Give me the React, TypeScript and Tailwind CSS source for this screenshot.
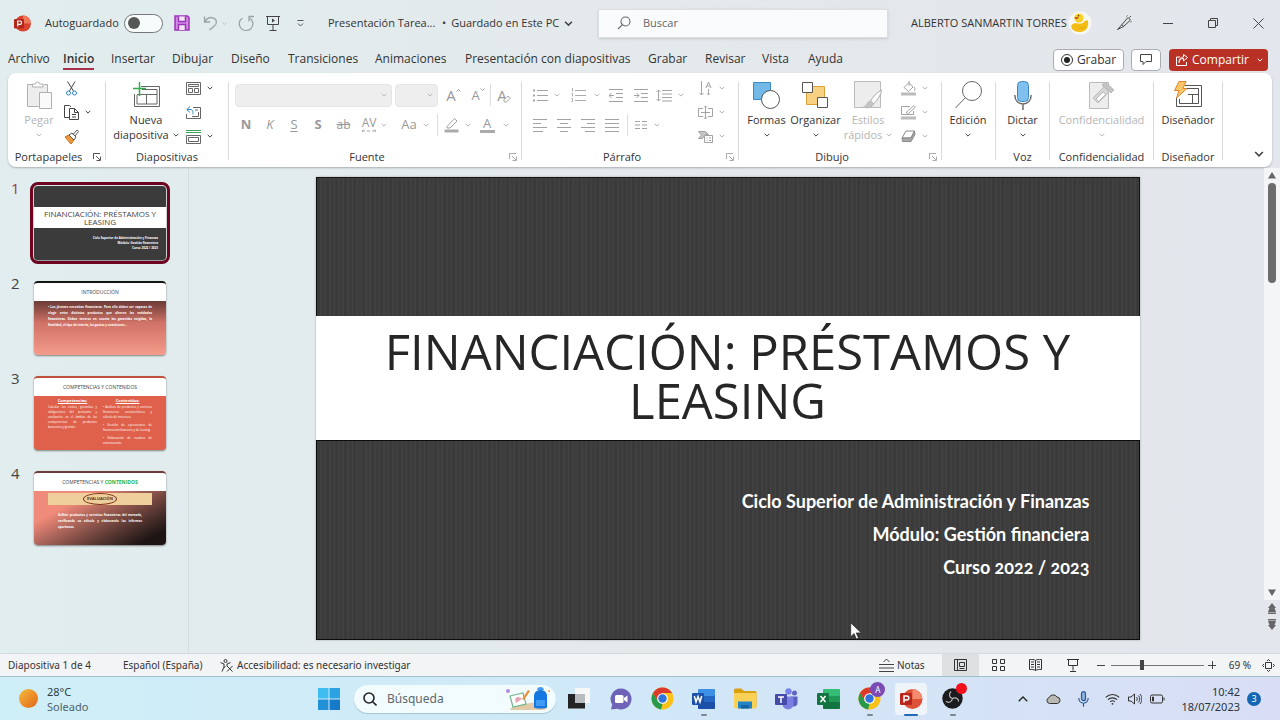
import type { ReactNode } from "react";

type Kids = { children?: ReactNode };

const Svg = ({ w, h, vb, children, stroke = "#444", sw = 1 }: { w: number; h: number; vb?: string; stroke?: string; sw?: number } & Kids) => (
  <svg width={w} height={h} viewBox={vb ?? `0 0 ${w} ${h}`} fill="none" stroke={stroke} strokeWidth={sw} aria-hidden="true" className="shrink-0">
    {children}
  </svg>
);

const Chev = ({ c = "#444", w = 6 }: { c?: string; w?: number }) => (
  <Svg w={w} h={w} vb="0 0 6 6" stroke={c} sw={1}>
    <path d="M.7 1.8 3 4.1 5.3 1.8" />
  </Svg>
);

const Btn = ({ label, cls, children }: { label: string; cls: string } & Kids) => (
  <button type="button" aria-label={label} className={`flex shrink-0 items-center justify-center ${cls}`}>
    {children}
  </button>
);

const Sep = () => <div className="mt-[6px] mb-[7px] w-px shrink-0 bg-[#d9dadb]" />;

const Group = ({ title, cls, launcher, faded, children }: { title: string; cls: string; launcher?: boolean; faded?: boolean } & Kids) => (
  <section className={`flex shrink-0 flex-col ${cls}`}>
    <div className="flex h-[73px] justify-start">{children}</div>
    <div className="flex h-4 items-center">
      <h2 className="flex-1 text-center text-[11px] leading-4 whitespace-nowrap text-[#333]">{title}</h2>
      {launcher && (
        <Btn label={`Opciones de ${title}`} cls="w-4">
          <Svg w={8} h={8} stroke={faded ? "#aaa" : "#555"}>
            <path d="M.5 6V.5H7M3 3l4 4M7.5 3.5v4h-4" />
          </Svg>
        </Btn>
      )}
    </div>
  </section>
);

const Big = ({ icon, lines, cls, faded, chevron = "none" }: { icon: ReactNode; lines: string[]; cls: string; faded?: boolean; chevron?: "none" | "inline" | "below" }) => (
  <button type="button" className={`flex shrink-0 flex-col items-center pt-[2px] text-[11px] leading-[15px] ${faded ? "text-[#b5b5b5]" : "text-[#333]"} ${cls}`}>
    <span className="flex h-[34px] items-center justify-center">{icon}</span>
    {lines.map((l, i) => (
      <span key={l} className="flex items-center gap-1 whitespace-nowrap">
        {l}
        {chevron === "inline" && i === lines.length - 1 && <Chev c={faded ? "#b5b5b5" : "#444"} />}
      </span>
    ))}
    {chevron === "below" && (
      <span className="flex h-[15px] items-center">
        <Chev c={faded ? "#b5b5b5" : "#444"} />
      </span>
    )}
  </button>
);

const Row3 = ({ items, cls }: { items: { label: string; icon: ReactNode; chev?: boolean; faded?: boolean }[]; cls: string }) => (
  <div className={`flex shrink-0 flex-col ${cls}`}>
    {items.map((i) => (
      <button type="button" key={i.label} aria-label={i.label} className="flex h-6 items-center gap-[6px]">
        <span className="flex w-4 justify-center">{i.icon}</span>
        {i.chev && <Chev c={i.faded ? "#b5b5b5" : "#444"} />}
      </button>
    ))}
  </div>
);

const G = "#a3a3a3";

const Lines = ({ xs }: { xs: [number, number][] }) => (
  <Svg w={14} h={13} stroke={G}>
    {xs.map(([a, b], i) => (
      <path key={i} d={`M${a} ${i * 4 + 0.5}H${b}`} />
    ))}
  </Svg>
);

const TABS: [string, string][] = [
  ["Archivo", "w-[55px]"],
  ["Inicio", "w-[48px]"],
  ["Insertar", "w-[61px]"],
  ["Dibujar", "w-[59px]"],
  ["Diseño", "w-[57px]"],
  ["Transiciones", "w-[87px]"],
  ["Animaciones", "w-[90px]"],
  ["Presentación con diapositivas", "w-[183px]"],
  ["Grabar", "w-[57px]"],
  ["Revisar", "w-[57px]"],
  ["Vista", "w-[46px]"],
  ["Ayuda", "w-[46px]"],
];

function TitleBar() {
  return (
    <header className="flex h-[46px] shrink-0 items-center pl-[14px] text-[11px] text-[#333]">
      <Svg w={17} h={17} stroke="none">
        <circle cx="9" cy="8.500" r="8" fill="#d9432d" />
        <path d="M9 .5a8 8 0 0 1 8 8H9z" fill="#ee7a5c" />
        <rect x="0" y="4" width="10" height="9.500" rx="1" fill="#b3261a" />
        <path d="M3.700 11.500V6h2.200a1.700 1.700 0 0 1 0 3.400H3.700" stroke="#fff" strokeWidth="1.200" />
      </Svg>
      <label htmlFor="autosave" className="ml-[14px] w-[79px] whitespace-nowrap">Autoguardado</label>
      <span className="flex h-[19px] w-[39px] shrink-0 items-center rounded-full border border-[#777] bg-[#f8fbfb] px-[3px]">
        <input id="autosave" type="checkbox" className="h-3 w-3 appearance-none rounded-full bg-[#565656]" />
      </span>
      <Btn label="Guardar" cls="ml-[3px] w-[32px]">
        <Svg w={16} h={16} stroke="#9a35b5" sw={1.5}>
          <path d="M1 1h12.500L15 2.500V15H1z" fill="#d38be6" />
          <path d="M4.500 1.500v5h7v-5M4.500 15V9.500h7V15" fill="#f2e6f6" />
        </Svg>
      </Btn>
      <Btn label="Deshacer" cls="w-[34px] gap-1">
        <Svg w={15} h={16} stroke="#9aa3a5" sw={1.3}>
          <path d="M1.500 1.500v5.500H7M1.700 6.800C4 3 7 2 10 2.800c4 1.300 4.500 5.700 1.500 8L6.500 15" />
        </Svg>
        <Chev c="#b3babc" w={5} />
      </Btn>
      <Btn label="Rehacer" cls="w-[28px]">
        <Svg w={16} h={16} stroke="#9aa3a5" sw={1.3}>
          <path d="M4.500 3A6.800 6.800 0 1 0 12 3.200M16 1.500h-5V6.500" />
        </Svg>
      </Btn>
      <Btn label="Presentar desde el principio" cls="w-[26px]">
        <Svg w={14} h={15} stroke="#444">
          <path d="M0 .5h14M1.500 .5v8h11v-8M7 8.500v5.500M3.500 14.500h7" />
          <path d="M6 2.500v4l3-2z" fill="#444" stroke="none" />
        </Svg>
      </Btn>
      <Btn label="Personalizar barra" cls="w-[28px]">
        <Svg w={7} h={7} stroke="#555">
          <path d="M.5 .5h6M1 3.500l2.500 2.500L6 3.500" />
        </Svg>
      </Btn>
      <span className="ml-[14px] w-[114px] whitespace-nowrap">Presentación Tarea...</span>
      <button type="button" className="flex shrink-0 items-center gap-[5px] whitespace-nowrap">
        <span>•</span> Guardado en Este PC <Chev w={9} />
      </button>
      <div className="ml-auto flex h-[29px] w-[290px] shrink-0 items-center gap-3 border border-[#dcdfe2] bg-[#f9fbfc] pl-[18px] shadow-sm">
        <Svg w={14} h={14} stroke="#666" sw={1.1}>
          <circle cx="8.500" cy="5.500" r="4.500" />
          <path d="M5.200 8.800 1 13" />
        </Svg>
        <input aria-label="Buscar" placeholder="Buscar" className="w-full bg-transparent text-[11px] outline-none placeholder:text-[#666]" />
      </div>
      <button type="button" className="ml-[23px] w-[157px] shrink-0 text-left whitespace-nowrap">ALBERTO SANMARTIN TORRES</button>
      <Btn label="Cuenta" cls="w-[24px]">
        <Svg w={24} h={24} stroke="none">
          <circle cx="12" cy="12" r="11.500" fill="#f7f8f2" />
          <path d="M3.500 14c2-2 4-2 6.500-1.500 3 .5 5.500-.5 7-2.500 1-1 2.500-1 3 0 .8 5-1 11-8.500 11C6 21 2.500 18 3.500 14z" fill="#f3bd14" />
          <circle cx="11" cy="7" r="4.600" fill="#fbd02a" />
          <path d="M6.500 6.500c1.500-.8 3-.8 4 0-.7 2-3.300 2-4 0z" fill="#c5421e" />
          <circle cx="10.500" cy="4.800" r=".8" fill="#3a2a10" />
          <path d="M10 16.500c3 1 5.500 .3 7.500-2-.5 3-4 4.500-7.500 2z" fill="#dda507" />
        </Svg>
      </Btn>
      <Btn label="Dibujar" cls="ml-[10px] w-[44px]">
        <Svg w={16} h={16} stroke="#444">
          <path d="M6 9.500 12 2.500l2.500 2.500-7 6.500zM6 9.500 1.500 14.500 7.500 11.500M10.500 1.500l1-1M14.500 7l1-.5M13.500 2.500l1.500-1.500" />
        </Svg>
      </Btn>
      <Btn label="Minimizar" cls="w-[44px]">
        <Svg w={10} h={10}><path d="M0 5.500h10" /></Svg>
      </Btn>
      <Btn label="Restaurar" cls="w-[46px]">
        <Svg w={10} h={10}><path d="M.5 2.500h7v7h-7zM2.500 2.500v-2h7v7h-2" /></Svg>
      </Btn>
      <Btn label="Cerrar" cls="w-[44px]">
        <Svg w={11} h={11}><path d="m.5 .5 10 10M10.500 .5l-10 10" /></Svg>
      </Btn>
    </header>
  );
}

function TabBar() {
  return (
    <nav className="flex h-[27px] shrink-0 items-center pr-3 pl-2 text-[12px] text-[#333]">
      {TABS.map(([t, w]) => (
        <a key={t} href="#" className={`flex shrink-0 whitespace-nowrap ${w}`}>
          <span className={t === "Inicio" ? "border-b-2 border-[#a8304c] font-semibold" : "border-b-2 border-transparent"}>{t}</span>
        </a>
      ))}
      <button type="button" className="ml-auto flex h-[22px] w-[71px] shrink-0 items-center justify-center gap-1 rounded border border-[#a9adb0] bg-white">
        <Svg w={12} h={12} stroke="#333"><circle cx="6" cy="6" r="5.500" /><circle cx="6" cy="6" r="3" fill="#222" stroke="none" /></Svg>
        Grabar
      </button>
      <Btn label="Comentarios" cls="ml-[7px] h-[22px] w-[30px] rounded border border-[#a9adb0] bg-white">
        <Svg w={12} h={11}><path d="M.5 .5h11v7H6l-3 3v-3H.5z" /></Svg>
      </Btn>
      <div className="ml-2 flex h-[22px] w-[99px] shrink-0 items-center rounded bg-[#b93024] text-white">
        <button type="button" className="flex flex-1 items-center gap-1 pl-[7px] font-medium whitespace-nowrap">
          <Svg w={12} h={12} stroke="#fff"><path d="M4 3H.5v8.500h10V8M3 8.500c.5-3 2-4 4.500-4V7l4-3.500-4-3V3C4.500 3 3 5 3 8.500z" /></Svg>
          Compartir
        </button>
        <Btn label="Más opciones" cls="w-4"><Chev c="#fff" /></Btn>
      </div>
    </nav>
  );
}

function Ribbon() {
  return (
    <div className="mx-2 flex h-[94px] shrink-0 rounded-lg bg-white pt-[3px] shadow-[0_1px_2px_rgba(0,0,0,0.25)]">
      <Group title="Portapapeles" cls="w-[97px]" launcher>
        <Big cls="ml-[9px] w-[44px]" faded chevron="below" lines={["Pegar"]} icon={
          <Svg w={26} h={28} stroke="#b0b0b0">
            <path d="M2 4h19v7h-8v14H2z" fill="#ededed" stroke="none" />
            <path d="M6 3.500H1.500v22h11M18 3.500h3.500V11" />
            <path d="M6.500 6V3h3a2 2 0 0 1 4 0h3.500v3z" fill="#fff" />
            <path d="M13.500 11.500h12v16h-12z" fill="#fafafa" />
          </Svg>} />
        <Row3 cls="ml-[2px]" items={[
          { label: "Cortar", icon: <Svg w={11} h={15}><path d="M1.500 .5 7.500 10M9 .5 3.500 10" /><circle cx="2.500" cy="12" r="2" stroke="#2b86c5" /><circle cx="8.500" cy="12" r="2" stroke="#2b86c5" /></Svg> },
          { label: "Copiar", chev: true, icon: <Svg w={15} h={15}><path d="M5 12.500H.5V.5h5L7 2M5.500 3.500h5l4 4v7h-9zM10.500 3.500v4h4M8 9.500h4M8 12h4" /></Svg> },
          { label: "Copiar formato", icon: <Svg w={15} h={15} stroke="#555"><path d="m1 8 4-2 5 5-3 4z" fill="#eb9b3a" stroke="#cc6e1c" /><path d="m5 6 3-2 4 4-2 3zM9 5.500 13 1l1.500 1.500L11 7" fill="#fff" /></Svg> },
        ]} />
      </Group>
      <Sep />
      <Group title="Diapositivas" cls="w-[122px]">
        <Big cls="ml-[5px] w-[70px]" chevron="inline" lines={["Nueva", "diapositiva"]} icon={
          <Svg w={27} h={27} stroke="#666">
            <path d="M8 4.500h18.500v20h-25V12" /><path d="M9 7.500h15V22H4v-9M4 12.500h20M13.500 12.500V22" />
            <path d="M6.500 0v14M0 6.500h13" stroke="#2fae4a" strokeWidth="1.500" />
          </Svg>} />
        <Row3 cls="ml-[4px]" items={[
          { label: "Diseño de diapositiva", chev: true, icon: <Svg w={15} h={13} stroke="#666"><path d="M.5 .5h14v12H.5zM2.500 2.500h10v2h-10zM2.500 6.500h4v4h-4zM8.500 6.500h4v4h-4z" /></Svg> },
          { label: "Restablecer", icon: <Svg w={15} h={13} stroke="#666"><path d="M7 1.500h7.500v11H.5V8" /><path d="M9 4h3M6 10.500h6.500V6" /><path d="M4 .5.800 3.500 4 6.500M1 3.500h3c3 0 3 2 3 5" stroke="#2b86c5" /></Svg> },
          { label: "Sección", chev: true, icon: <Svg w={15} h={15} stroke="#666"><path d="M0 1.500h15M0 3.500h15" stroke="#3da457" /><path d="M.5 6.500h14v8H.5zM2.500 8.500h10v4h-10z" /></Svg> },
        ]} />
      </Group>
      <Sep />
      <Group title="Fuente" cls="w-[292px]" launcher faded>
        <div className="flex flex-col pt-1 text-[#999]">
          <div className="flex h-[30px] items-center pl-[6px]">
            <span className="flex h-[23px] w-[157px] items-center rounded-sm border border-[#e6e6e6] bg-[#eee] pr-1">
              <select disabled aria-label="Fuente" className="min-w-0 flex-1 appearance-none bg-transparent"><option /></select>
              <Chev c="#b5b5b5" />
            </span>
            <span className="ml-[3px] flex h-[23px] w-[43px] items-center rounded-sm border border-[#e6e6e6] bg-[#eee] pr-1">
              <select disabled aria-label="Tamaño de fuente" className="min-w-0 flex-1 appearance-none bg-transparent"><option /></select>
              <Chev c="#b5b5b5" />
            </span>
            <button type="button" className="ml-[3px] flex w-[25px] justify-center text-[15px] leading-4">A<span className="pt-[1px]"><Svg w={5} h={5} stroke={G}><path d="m.5 3.500 2-2 2 2" /></Svg></span></button>
            <button type="button" className="flex w-[24px] justify-center text-[13px] leading-4">A<span><Svg w={5} h={5} stroke={G}><path d="m.5 1.500 2 2 2-2" /></Svg></span></button>
            <div className="h-[22px] w-px bg-[#ddd]" />
            <Btn label="Borrar formato" cls="w-[26px] text-[15px] leading-4">
              A<span className="-ml-1 flex pt-2"><Svg w={8} h={7} stroke={G}><path d="M.7 4 4 .7h2L7.300 2 3.500 6h-2z" fill="#fff" /></Svg></span>
            </Btn>
          </div>
          <div className="flex h-[30px] items-center pl-[5px] text-[13px]">
            <button type="button" className="w-6 font-bold">N</button>
            <button type="button" className="w-6 italic">K</button>
            <button type="button" className="w-6 underline underline-offset-2">S</button>
            <button type="button" className="w-6 font-bold">S</button>
            <button type="button" className="w-[27px] text-[12px] line-through">ab</button>
            <button type="button" aria-label="Espaciado entre caracteres" className="flex w-6 flex-col items-center text-[12px] leading-3">
              AV
              <Svg w={16} h={4} stroke={G}><path d="M2.500 .5 1 2l1.500 1.500M1 2h14M13.500 .5 15 2l-1.500 1.500" strokeDasharray="3 2" /></Svg>
            </button>
            <Chev c="#b5b5b5" />
            <button type="button" className="ml-2 w-[28px] text-[13px]">Aa</button>
            <Chev c="#b5b5b5" />
            <div className="ml-2 h-[22px] w-px bg-[#ddd]" />
            <Btn label="Color de resaltado" cls="w-[27px]">
              <Svg w={15} h={16} stroke={G}><path d="M3 9.500 10.500 1.500l2.500 2.500L6 11H3z" /><path d="M.5 12.500h14v3H.5z" fill="#aaa" stroke="none" /></Svg>
            </Btn>
            <Chev c="#b5b5b5" />
            <button type="button" className="ml-[3px] flex w-[26px] flex-col items-center leading-3">
              A<span className="mt-px h-[3px] w-[15px] bg-[#aaa]" />
            </button>
            <span className="ml-[3px]"><Chev c="#b5b5b5" /></span>
          </div>
        </div>
      </Group>
      <Sep />
      <Group title="Párrafo" cls="w-[216px]" launcher faded>
        <div className="flex w-[170px] flex-col pt-1 pl-[6px]">
          <div className="flex h-[30px] items-center">
            <Btn label="Viñetas" cls="w-6"><Svg w={15} h={14} stroke={G}><path d="M4 2.500h11M4 7.500h11M4 12.500h11" /><path d="M0 2.500h2M0 7.500h2M0 12.500h2" strokeWidth="2" /></Svg></Btn>
            <span className="w-[10px] pl-0.5"><Chev c="#b5b5b5" /></span>
            <Btn label="Numeración" cls="w-8"><Svg w={15} h={14} stroke={G}><path d="M4 2.500h11M4 7.500h11M4 12.500h11M1.500 0v3.500M.5 5.500h1v3M.5 10.500h1v3h-1" strokeWidth=".9" /></Svg></Btn>
            <span className="w-2"><Chev c="#b5b5b5" /></span>
            <Btn label="Disminuir nivel" cls="w-[28px]"><Svg w={14} h={13} stroke={G}><path d="M0 .5h14M7 4.500h7M7 8.500h7M0 12.500h14M0 6.500h5M2.500 4 0 6.500 2.500 9" /></Svg></Btn>
            <Btn label="Aumentar nivel" cls="w-[22px]"><Svg w={14} h={13} stroke={G}><path d="M0 .5h14M7 4.500h7M7 8.500h7M0 12.500h14M0 6.500h5M2.500 4 5 6.500 2.500 9" /></Svg></Btn>
            <Btn label="Interlineado" cls="w-6"><Svg w={16} h={13} stroke={G}><path d="M6 1.500h10M6 5h10M6 8.500h10M6 12h10M2.500 1v11M.5 3l2-2 2 2M.5 10l2 2 2-2" /></Svg></Btn>
            <span className="pl-0.5"><Chev c="#b5b5b5" /></span>
          </div>
          <div className="flex h-[30px] items-center">
            <Btn label="Izquierda" cls="w-6"><Lines xs={[[0, 14], [0, 8], [0, 14], [0, 10]]} /></Btn>
            <Btn label="Centrar" cls="w-6"><Lines xs={[[0, 14], [3, 11], [0, 14], [3, 11]]} /></Btn>
            <Btn label="Derecha" cls="w-6"><Lines xs={[[0, 14], [6, 14], [0, 14], [4, 14]]} /></Btn>
            <Btn label="Justificar" cls="w-6"><Lines xs={[[0, 14], [0, 14], [0, 14], [0, 14]]} /></Btn>
            <div className="ml-[3px] h-[22px] w-px bg-[#ddd]" />
            <Btn label="Columnas" cls="w-[26px]"><Svg w={12} h={8} stroke={G}><path d="M0 .5h5M0 4h5M0 7.500h5M7 .5h5M7 4h5M7 7.500h5" /></Svg></Btn>
            <Chev c="#b5b5b5" />
          </div>
        </div>
        <Row3 cls="ml-[5px]" items={[
          { label: "Dirección del texto", chev: true, faded: true, icon: <Svg w={13} h={15} stroke={G}><path d="M2.500 0v14M.5 12l2 2 2-2M7 7l2.500-6L12 7M8 5h3M9.500 8v6M8 12.500l1.500 1.500 1.500-1.500" /></Svg> },
          { label: "Alinear texto", chev: true, faded: true, icon: <Svg w={15} h={13} stroke={G}><path d="M5 2.500H.5v8H5M10 2.500h4.500v8H10M7.500 0v13M3 6.500h9M6 1.500 7.500 0 9 1.500M6 11.500 7.500 13 9 11.500" /></Svg> },
          { label: "Convertir a SmartArt", chev: true, faded: true, icon: <Svg w={15} h={13} stroke={G}><path d="M.5 1.500h7l3 3h-3l-3 4h-4l3-3.500z" fill="#c4c4c4" /><path d="M6.500 5.500h8v7h-8zM8.500 8h1M11 8h2M8.500 10.500h1M11 10.500h2" fill="#fff" /></Svg> },
        ]} />
      </Group>
      <Sep />
      <Group title="Dibujo" cls="w-[202px]" launcher faded>
        <Big cls="ml-[3px] w-[49px]" chevron="below" lines={["Formas"]} icon={
          <Svg w={27} h={27} stroke="#555"><path d="M.5 .5h17v17H.5z" fill="#72b9e8" stroke="#3a8bc4" /><circle cx="17.500" cy="17.500" r="9" fill="#fff" /></Svg>} />
        <Big cls="w-[49px]" chevron="below" lines={["Organizar"]} icon={
          <Svg w={27} h={27} stroke="#555"><path d="M4.500 4.500h18v18h-18z" fill="#f8d183" stroke="#dba23c" /><path d="M.5 .5h10v10H.5zM15.500 15.500h10v10h-10z" fill="#fff" /></Svg>} />
        <Big cls="w-[56px]" faded chevron="inline" lines={["Estilos", "rápidos"]} icon={
          <Svg w={28} h={28} stroke="#bbb"><path d="M.5 .5h26v26H.5z" fill="#ededed" /><path d="M27.500 9c-4 2-9 7-11 11l3 3c4-4 8-10 8-14z" fill="#fff" stroke="#aaa" /><path d="M16.500 20c-3 0-3 4-7 6 5 2 9 0 10-3z" fill="#c4c4c4" /></Svg>} />
        <Row3 cls="ml-[4px]" items={[
          { label: "Relleno de forma", chev: true, faded: true, icon: <Svg w={15} h={15} stroke={G}><path d="m3 6.500 5-5 4 4.500-4.500 4.500zM8 0v5M13 6c1.500 2 1.500 3.500 0 3.500" /><path d="M0 11.500h15v3H0z" fill="#bbb" stroke="none" /></Svg> },
          { label: "Contorno de forma", chev: true, faded: true, icon: <Svg w={15} h={15} stroke={G}><path d="M9 1.500H.5v8h12V6M5 7.500l8-7 1.500 1.500-7 6.500z" /><path d="M0 11.500h15v3H0z" fill="#bbb" stroke="none" /></Svg> },
          { label: "Efectos de forma", chev: true, faded: true, icon: <Svg w={15} h={13} stroke="#888"><path d="M5 1h8.500L10 8H1z" fill="#fff" /><path d="m1 8 .5 3.500H10L14 4.500 13.500 1 10 8z" fill="#aaa" /></Svg> },
        ]} />
      </Group>
      <Sep />
      <Group title="" cls="w-[53px]">
        <Big cls="w-[52px]" chevron="below" lines={["Edición"]} icon={
          <Svg w={27} h={28} stroke="#666"><circle cx="17" cy="10" r="9.500" /><path d="M10.300 16.700 .5 27" /></Svg>} />
      </Group>
      <Sep />
      <Group title="Voz" cls="w-[53px]">
        <Big cls="w-[53px]" chevron="below" lines={["Dictar"]} icon={
          <Svg w={18} h={29} stroke="#666"><rect x="3.500" y=".5" width="11" height="20" rx="4" fill="#7fc0ee" stroke="#3d86bf" /><path d="M.8 14c0 12 16.400 12 16.400 0M9 23v6" strokeWidth="1.400" /></Svg>} />
      </Group>
      <Sep />
      <Group title="Confidencialidad" cls="w-[103px]">
        <Big cls="w-[103px]" faded chevron="below" lines={["Confidencialidad"]} icon={
          <Svg w={26} h={28} stroke="#bbb"><path d="M.5 1.500h19v26H.5z" fill="#ededed" /><path d="m4 17 11-11 5 5L9 22z" fill="#d6d6d6" /><path d="m13 4 3-3 9 8-3 3z" fill="#c4c4c4" /><path d="m7 18 7-7 2.500 2.500-7 7z" fill="#fff" /></Svg>} />
      </Group>
      <Sep />
      <Group title="Diseñador" cls="w-[68px]">
        <Big cls="w-[68px]" lines={["Diseñador"]} icon={
          <Svg w={28} h={28} stroke="#555"><path d="M11 4.500h16.500v21h-25V17" /><path d="M12 7.500h12.500v15h-19V18M14 13.500h10.500M18.500 13.500v9" /><path d="m5 .5h7l-3 7h4L2.500 17 5 9.500H.5z" fill="#f8c668" stroke="#e0862b" /></Svg>} />
      </Group>
      <Sep />
      <div className="flex flex-1 items-end justify-end pr-2 pb-[5px]">
        <Btn label="Contraer la cinta" cls="h-4 w-[10px]"><Chev w={10} /></Btn>
      </div>
    </div>
  );
}

const stripes = "bg-[repeating-linear-gradient(90deg,#3a3a3a_0_3px,#404040_3px_5px,#3c3c3c_5px_8px,#434343_8px_9px)]";

function Thumbs() {
  const frame = "mt-[6px] flex h-[74px] w-[132px] flex-col overflow-hidden rounded-sm text-white shadow-[0_1px_2px_rgba(0,0,0,0.45)]";
  const num = "w-[23px] shrink-0 text-[15px] leading-4";
  return (
    <aside className="w-[189px] shrink-0 border-r border-[#d3dbdf] pt-[12px] pl-[11px]">
      <ol className="flex flex-col gap-[15px] text-[#444]">
        <li className="flex">
          <span className={`${num} text-[#a03a4c]`}>1</span>
          <div className={`${frame} bg-[#3b3b3b] outline-[3px] outline-offset-1 outline-[#6d0420]`}>
            <div className="h-[21px]" />
            <div className="flex h-[21px] flex-col justify-center bg-white text-center text-[8px] leading-[8px] text-[#444]">
              <p className="whitespace-nowrap">FINANCIACIÓN: PRÉSTAMOS Y</p>
              <p>LEASING</p>
            </div>
            <div className="pt-2 pr-2 text-right text-[3px] leading-[5px] font-bold">
              <p>Ciclo Superior de Administración y Finanzas</p>
              <p>Módulo: Gestión financiera</p>
              <p>Curso 2022 / 2023</p>
            </div>
          </div>
        </li>
        <li className="flex">
          <span className={num}>2</span>
          <div className={`${frame} border-t-2 border-[#141414] bg-linear-to-b from-[#5b332f] from-20% via-[#d07266] via-55% to-[#f49c8c]`}>
            <p className="h-[18px] bg-white text-center text-[5px] leading-[18px] text-[#444]">INTRODUCCIÓN</p>
            <p className="px-[14px] pt-[3px] text-justify text-[3px] leading-[6px] font-bold">
              • Los jóvenes necesitan financiarse. Para ello deben ser capaces de elegir entre distintos productos que ofrecen las entidades financieras. Deben tenerse en cuenta las garantías exigidas, la finalidad, el tipo de interés, los gastos y comisiones…
            </p>
          </div>
        </li>
        <li className="flex">
          <span className={num}>3</span>
          <div className={`${frame} border-t-2 border-[#c0503c] bg-[#e0614b]`}>
            <p className="h-[18px] bg-white text-center text-[5px] leading-[18px] whitespace-nowrap text-[#444]">COMPETENCIAS Y CONTENIDOS</p>
            <div className="grid grid-cols-2 gap-[6px] px-[14px] pt-[2px] text-justify text-[3px] leading-[5px]">
              <div>
                <p className="text-center text-[4px] font-bold underline">Competencias:</p>
                <p className="mt-[2px]">Calcular los costes, garantías y obligaciones del préstamo y analizarlos en el ámbito de las competencias de productos bancarios y gestión.</p>
              </div>
              <div>
                <p className="text-center text-[4px] font-bold underline">Contenidos:</p>
                <p className="mt-[2px]">• Análisis de productos y servicios financieros: características y cálculo de intereses.</p>
                <p className="mt-[3px]">• Gestión de operaciones de financiación bancaria y de leasing.</p>
                <p className="mt-[3px]">• Elaboración de cuadros de amortización.</p>
              </div>
            </div>
          </div>
        </li>
        <li className="flex">
          <span className={num}>4</span>
          <div className={`${frame} border-t-2 border-[#6e3d3b] bg-linear-to-br from-[#f08a7a] from-35% to-[#1c1514] to-90%`}>
            <p className="h-[18px] shrink-0 bg-white text-center text-[5px] leading-[18px] whitespace-nowrap text-[#444]">
              COMPETENCIAS Y <b className="text-[#12b54e]">CONTENIDOS</b>
            </p>
            <div className="mx-[14px] mt-[2px] flex h-3 shrink-0 items-center justify-center bg-[#efcf9b]">
              <span className="flex h-3 w-[34px] items-center justify-center rounded-[50%] border border-[#7a3418] text-[4px] leading-3 font-bold text-[#5a3018]">EVALUACIÓN</span>
            </div>
            <p className="px-6 pt-[7px] text-justify text-[3px] leading-[6px] font-bold">
              Definir productos y servicios financieros del mercado, verificando su cálculo y elaborando los informes oportunos.
            </p>
          </div>
        </li>
      </ol>
    </aside>
  );
}

function Stage() {
  return (
    <main className="flex min-w-0 flex-1 justify-center pt-[9px] pb-[13px] pl-[2px]">
      <article className="relative grid aspect-[824/463] h-full grid-rows-[139fr_124fr_200fr] shadow-[0_0_2px_rgba(0,0,0,0.3)]">
        <div className={`border-x border-t border-[#151515] ${stripes}`} />
        <div className="flex flex-col items-center justify-center bg-white pb-1">
          <h1 className="text-center text-[49px] leading-[49px] whitespace-nowrap text-[#262626]">
            FINANCIACIÓN: PRÉSTAMOS Y<br />LEASING
          </h1>
        </div>
        <div className={`border border-[#0c0c0c] pt-[44px] pr-[49px] text-right font-[Lato,sans-serif] text-[18px] leading-[33px] font-bold text-white oldstyle-nums ${stripes}`}>
          <p>Ciclo Superior de Administración y Finanzas</p>
          <p>Módulo: Gestión financiera</p>
          <p>Curso 2022 / 2023</p>
        </div>
        <svg width="12" height="18" viewBox="0 0 12 18" className="absolute top-[445px] left-[534px]" aria-hidden="true">
          <path d="M.7 .8v14l3.400-3.200 2.200 5.400 2.200-.9-2.200-5.200h5z" fill="#fff" stroke="#222" strokeWidth=".7" />
        </svg>
      </article>
    </main>
  );
}

function VScroll() {
  return (
    <div className="flex w-4 shrink-0 flex-col items-center">
      <div className="flex w-full flex-1 flex-col items-center bg-[#f4f5f6]">
        <Btn label="Subir" cls="h-[15px] w-4"><Svg w={8} h={7} stroke="none"><path d="m4 0 4 6.500H0z" fill="#666" /></Svg></Btn>
        <div className="h-[100px] w-2 rounded-full bg-[#6c6c6c]" />
        <Btn label="Bajar" cls="mt-auto h-[15px] w-4"><Svg w={8} h={7} stroke="none"><path d="M0 .5h8L4 7z" fill="#666" /></Svg></Btn>
      </div>
      <Btn label="Diapositiva anterior" cls="h-4 w-4"><Svg w={8} h={11} stroke="none"><path d="m4 0 4 5H6.500L8 9H0l1.500-4H0zM0 9.500h8V11H0z" fill="#666" /></Svg></Btn>
      <Btn label="Diapositiva siguiente" cls="mb-[21px] h-4 w-4"><Svg w={8} h={11} stroke="none"><path d="M0 0h8v1.500H0zM0 2h8L6.500 6H8l-4 5-4-5h1.500z" fill="#666" /></Svg></Btn>
    </div>
  );
}

function StatusBar() {
  return (
    <footer className="flex h-[22px] shrink-0 items-center bg-[#f3f4f5] pl-2 font-['Noto_Sans',sans-serif] text-[10px] text-[#333]">
      <span className="w-[115px] whitespace-nowrap">Diapositiva 1 de 4</span>
      <button type="button" className="w-[97px] text-left whitespace-nowrap">Español (España)</button>
      <button type="button" className="flex items-center gap-1 whitespace-nowrap">
        <Svg w={13} h={13} stroke="#333"><circle cx="5.500" cy="2" r="1.500" /><path d="M.5 3.500 4 5v3l-2 4.500M10.500 3.500 7 5v2M4 8.500l1.500-1M7 7l5.500 5.500M12.500 7 7 12.500" /></Svg>
        Accesibilidad: es necesario investigar
      </button>
      <button type="button" className="ml-auto flex w-[63px] items-center gap-[3px] whitespace-nowrap">
        <Svg w={15} h={14} stroke="#444"><path d="M4.500 4 7.500 1l3 3M0 6.500h15M0 10h15M0 13.500h15" /></Svg>
        Notas
      </button>
      <Btn label="Normal" cls="h-full w-[37px] bg-[#dfe0e1]"><Svg w={13} h={12} stroke="#333"><path d="M.5 .5h12v11H.5zM3.500 .5v11M5.500 3.500h5v4h-5zM5.500 9.500h5" /></Svg></Btn>
      <Btn label="Clasificador" cls="w-[38px]"><Svg w={13} h={12} stroke="#333"><path d="M.5 .5h4v4h-4zM8.500 .5h4v4h-4zM.5 7.500h4v4h-4zM8.500 7.500h4v4h-4z" /></Svg></Btn>
      <Btn label="Lectura" cls="w-[37px]"><Svg w={13} h={12} stroke="#333"><path d="M6.500 1.500C5 .3 3 .3.5 .5v10c2.500-.2 4.500 0 6 1 1.500-1 3.500-1.200 6-1V.5c-2.500-.2-4.500-.2-6 1zM6.500 1.500v10M2 3h3M2 5.500h3M2 8h3M8 3h3M8 5.500h3M8 8h3" /></Svg></Btn>
      <Btn label="Presentación" cls="w-[37px]"><Svg w={12} h={13} stroke="#333"><path d="M0 .5h12M1.500 .5v6h9v-6M6 6.500v5M3 12.500h6" /></Svg></Btn>
      <Btn label="Alejar" cls="w-[20px]"><Svg w={8} h={8}><path d="M0 4.500h8" /></Svg></Btn>
      <input type="range" aria-label="Zoom" defaultValue={33} className="h-3 w-[93px] appearance-none bg-[linear-gradient(#777,#777)] bg-[length:100%_1px] bg-center bg-no-repeat [&::-webkit-slider-thumb]:h-[10px] [&::-webkit-slider-thumb]:w-[4px] [&::-webkit-slider-thumb]:appearance-none [&::-webkit-slider-thumb]:bg-[#444]" />
      <Btn label="Acercar" cls="w-[16px]"><Svg w={8} h={8}><path d="M0 4.500h8M4.500 0v8" /></Svg></Btn>
      <button type="button" className="w-[36px] pl-1 whitespace-nowrap">69 %</button>
      <Btn label="Ajustar" cls="w-[24px]"><Svg w={13} h={13} stroke="#333"><path d="M3.500 3.500h6v6h-6zM5 2 6.500 .5 8 2M5 11l1.500 1.500L8 11M2 5 .5 6.500 2 8M11 5l1.500 1.500L11 8" /></Svg></Btn>
    </footer>
  );
}

const TaskIcon = ({ label, active, running, children }: { label: string; active?: boolean; running?: boolean } & Kids) => (
  <button type="button" aria-label={label} className="relative flex h-11 w-6 items-center justify-center">
    {active && <span className="absolute top-[6px] -left-1 h-8 w-8 rounded bg-[#eff4fb]" />}
    <span className="relative flex">{children}</span>
    {running && <span className={active ? "absolute bottom-[5px] h-[2px] w-[14px] rounded bg-[#2468b8]" : "absolute bottom-[5px] h-[2px] w-[6px] rounded bg-[#7c8791]"} />}
  </button>
);

const Chrome = () => (
  <Svg w={23} h={23} vb="0 0 24 24" stroke="none">
    <circle cx="12" cy="12" r="11.500" fill="#fbc116" />
    <path d="M2 6.300A11.500 11.500 0 0 1 22 6.300H12L7 14.800z" fill="#dc3a2c" />
    <path d="M2 6.300 7.200 14.900 12 17.500 10.500 23.400A11.500 11.500 0 0 1 2 6.300z" fill="#27994a" />
    <circle cx="12" cy="12" r="5.600" fill="#fff" />
    <circle cx="12" cy="12" r="4.400" fill="#2f73dc" />
  </Svg>
);

const Office = ({ d, dark, mid, light }: { d: string; dark: string; mid: string; light: string }) => (
  <Svg w={23} h={22} stroke="none">
    <rect x="6" y="1" width="17" height="20" rx="1.500" fill={mid} />
    <rect x="6" y="1" width="17" height="7" rx="1.500" fill={light} />
    <rect x="6" y="14" width="17" height="7" rx="1.500" fill={dark} />
    <rect x="0" y="5" width="12" height="12" rx="1.200" fill={dark} />
    <path d={d} stroke="#fff" strokeWidth="1.500" />
  </Svg>
);

function Taskbar() {
  return (
    <footer className="flex h-11 shrink-0 items-center border-t border-[#9fbfcb] bg-linear-to-r from-[#cfeff8] via-[#d0e8f7] to-[#d9def5] pl-[19px] font-['Noto_Sans',sans-serif]">
      <button type="button" className="flex w-[297px] shrink-0 items-center gap-[9px] text-left">
        <span className="h-[19px] w-[19px] rounded-full bg-linear-to-br from-[#f4b93a] to-[#e0661c]" />
        <span className="flex flex-col text-[11px] leading-[15px] text-[#2c3e46]">
          <span>28°C</span>
          <span className="text-[#51636b]">Soleado</span>
        </span>
      </button>
      <Btn label="Inicio" cls="w-[26px]">
        <Svg w={22} h={22} stroke="none">
          <path d="M0 0h10.500v10.500H0z" fill="#3fbcf0" /><path d="M11.500 0H22v10.500H11.500z" fill="#2da2e2" />
          <path d="M0 11.500h10.500V22H0z" fill="#2291d8" /><path d="M11.500 11.500H22V22H11.500z" fill="#157ac8" />
        </Svg>
      </Btn>
      <div className="ml-3 flex h-7 w-[202px] shrink-0 items-center gap-[10px] rounded-full bg-[#f2fbfe] pr-1 pl-[9px] shadow-[0_1px_1px_rgba(80,130,150,0.35)]">
        <Svg w={14} h={14} stroke="#222" sw={1.6}><circle cx="6" cy="6" r="5" /><path d="m9.700 9.700 3.800 3.800" /></Svg>
        <input aria-label="Búsqueda" placeholder="Búsqueda" className="min-w-0 flex-1 bg-transparent text-[12px] outline-none placeholder:text-[#5c686d]" />
        <Svg w={46} h={24} stroke="none">
          <path d="M4 22c6-6 14-4 20-6 8-1 14-1 17 4 0 3-4 3-8 3H8c-3 0-4 0-4-1z" fill="#e2c9a6" />
          <path d="m4 9 13-3 3 11-13 3z" fill="#fff" stroke="#6fb58f" strokeWidth="1.200" />
          <path d="M9 12c2-3 5-2 7 0l-6 4z" fill="#e6a4b8" />
          <path d="m16 12 6-9 2 1-6 9z" fill="#ee8f35" />
          <circle cx="2" cy="4" r="2" fill="#b48ae0" /><circle cx="43" cy="4" r="1" fill="#f1a13b" />
          <path d="M28 9c0-8 13-8 13 0v11c0 2-13 2-13 0z" fill="#1477e2" /><path d="M31 3c0-4 7-4 7 0M30 13h9v6h-9z" fill="#3f9bf3" />
        </Svg>
      </div>
      <div className="ml-[11px] flex w-[398px] shrink-0 items-center justify-between">
        <TaskIcon label="Vista de tareas"><Svg w={22} h={21} stroke="none"><rect x="7" y="0" width="15" height="15" fill="#f7f7f7" /><path d="M0 6h7v9h10v5.500H0z" fill="#232323" /><path d="M7 6h10v9H7z" fill="#b9bcbe" /></Svg></TaskIcon>
        <TaskIcon label="Chat"><Svg w={22} h={22} stroke="none"><path d="M11 .5a10.500 10.500 0 1 1-4 20.200L1 21.500l1.200-5A10.500 10.500 0 0 1 11 .5z" fill="#6f63b8" /><rect x="5" y="7" width="8.500" height="8" rx="1.500" fill="#fff" /><path d="m14 10 3.500-2.500v7L14 12z" fill="#fff" /></Svg></TaskIcon>
        <TaskIcon label="Google Chrome"><Chrome /></TaskIcon>
        <TaskIcon label="Word" running><Office d="m2.300 8 1.700 6 2-5.500 2 5.500 1.700-6" dark="#1b4fa8" mid="#2468c4" light="#3c90e6" /></TaskIcon>
        <TaskIcon label="Explorador de archivos"><Svg w={23} h={21} stroke="none"><path d="M0 2a1.500 1.500 0 0 1 1.500-1.500h6L10 3h11a1.500 1.500 0 0 1 1.500 1.500V19H0z" fill="#d9a012" /><path d="M0 5h22.500v14a1.500 1.500 0 0 1-1.500 1.500H1.500A1.500 1.500 0 0 1 0 19z" fill="#fad157" /><path d="M4 13.500h14v7H4z" fill="#2384c6" /><path d="M7 17h8v3.500H7z" fill="#1664a5" /></Svg></TaskIcon>
        <TaskIcon label="Teams"><Svg w={23} h={22} stroke="none"><circle cx="19.500" cy="5" r="2.500" fill="#6264c0" /><circle cx="13.500" cy="3.500" r="3.200" fill="#7b83eb" /><path d="M16 8.500h6.500v6c0 4-4 5-6 3z" fill="#5a5fc2" /><path d="M7.500 8.500h11V16c0 7-11 7-11 0z" fill="#7b7fe0" /><rect x="0" y="6" width="12" height="11" rx="1" fill="#464aa8" /><path d="M3 9h6M6 9v6" stroke="#fff" strokeWidth="1.500" /></Svg></TaskIcon>
        <TaskIcon label="Excel"><Office d="m3.500 8 5 6M8.500 8l-5 6" dark="#12743f" mid="#1f9a56" light="#33bd75" /></TaskIcon>
        <TaskIcon label="Google Chrome, perfil A" running>
          <Chrome />
          <span className="absolute -top-[5px] -right-[4px] flex h-[15px] w-[15px] items-center justify-center rounded-full bg-[#7a4bb5] text-[8px] leading-none text-white">A</span>
        </TaskIcon>
        <TaskIcon label="PowerPoint" active running><Svg w={23} h={22} stroke="none"><circle cx="12.500" cy="11" r="10" fill="#dd5236" /><path d="M12.500 1a10 10 0 0 1 10 10h-10z" fill="#f58b6e" /><rect x="0" y="5" width="12" height="12" rx="1.200" fill="#b9271c" /><path d="M4 14.500V8h2.800a2 2 0 0 1 0 4H4" stroke="#fff" strokeWidth="1.500" /></Svg></TaskIcon>
        <TaskIcon label="OBS Studio" running>
          <Svg w={21} h={21} stroke="none"><circle cx="10.500" cy="10.500" r="10.200" fill="#1c1c1e" /><path d="M9 3.500c-2.500 2.500-2 6 1.500 7C14 9 17 11 16.500 13.500M10.500 10.500C10 14 6 15.500 4 13" stroke="#b9b9b9" strokeWidth="1.200" /></Svg>
          <span className="absolute -top-[5px] -right-[4px] h-[11px] w-[11px] rounded-full bg-[#f3101c]" />
        </TaskIcon>
      </div>
      <div className="ml-auto flex shrink-0 items-center">
        <Btn label="Iconos ocultos" cls="w-[30px]"><Svg w={10} h={6} stroke="#222" sw={1.3}><path d="M.7 5.300 5 1l4.300 4.300" /></Svg></Btn>
        <Btn label="OneDrive" cls="w-[30px]"><Svg w={15} h={10} stroke="#333"><path d="M3.500 9.500a3 3 0 0 1-.5-5.800 4.500 4.500 0 0 1 8-.7 3.300 3.300 0 0 1 .5 6.500z" fill="#b9b9b3" /></Svg></Btn>
        <Btn label="Micrófono" cls="w-[30px]"><Svg w={11} h={16} stroke="#2c5898" sw={1.2}><rect x="3.500" y=".7" width="4" height="9" rx="2" fill="#8fb2dd" /><path d="M.8 7c0 7 9.400 7 9.400 0M5.500 12.300v3.500" /></Svg></Btn>
        <button type="button" aria-label="Red, volumen y batería" className="flex w-[67px] items-center justify-end gap-2">
          <Svg w={15} h={12} stroke="#333" sw={1.1}><path d="M.8 4.300a9.500 9.500 0 0 1 13.400 0M3 6.700a6.400 6.400 0 0 1 9 0M5.200 8.900a3.300 3.300 0 0 1 4.600 0" /><circle cx="7.500" cy="10.800" r=".9" fill="#333" stroke="none" /></Svg>
          <Svg w={14} h={12} stroke="#333"><path d="M.5 4v4h2.500l3.500 3V1L3 4zM8.500 4.200c1 1 1 2.600 0 3.600M10.200 2.500c2 2 2 5 0 7M12 1c2.500 3 2.500 7 0 10" /></Svg>
          <Svg w={15} h={10} stroke="#333"><rect x=".5" y="1" width="12" height="8" rx="1.500" /><path d="M2.500 3h1v4h-1zM14 3.500v3" fill="#333" /></Svg>
        </button>
        <div className="w-[75px] text-right text-[11px] leading-[15px] whitespace-nowrap text-[#2c3540]">
          <p>10:42</p>
          <p>18/07/2023</p>
        </div>
        <span className="mr-[19px] ml-[7px] flex h-[14px] w-[14px] items-center justify-center rounded-full bg-[#1468b3] text-[9px] leading-none text-white">3</span>
      </div>
    </footer>
  );
}

export default function App() {
  return (
    <div className="flex h-screen flex-col overflow-hidden bg-linear-to-r from-[#e1edee] via-[#e4e9ec] to-[#e3e6ec] font-['Open_Sans','Noto_Sans',sans-serif]">
      <TitleBar />
      <TabBar />
      <Ribbon />
      <div className="flex min-h-0 flex-1 border-b border-[#d5dade] pt-px">
        <Thumbs />
        <Stage />
        <VScroll />
      </div>
      <StatusBar />
      <Taskbar />
    </div>
  );
}
